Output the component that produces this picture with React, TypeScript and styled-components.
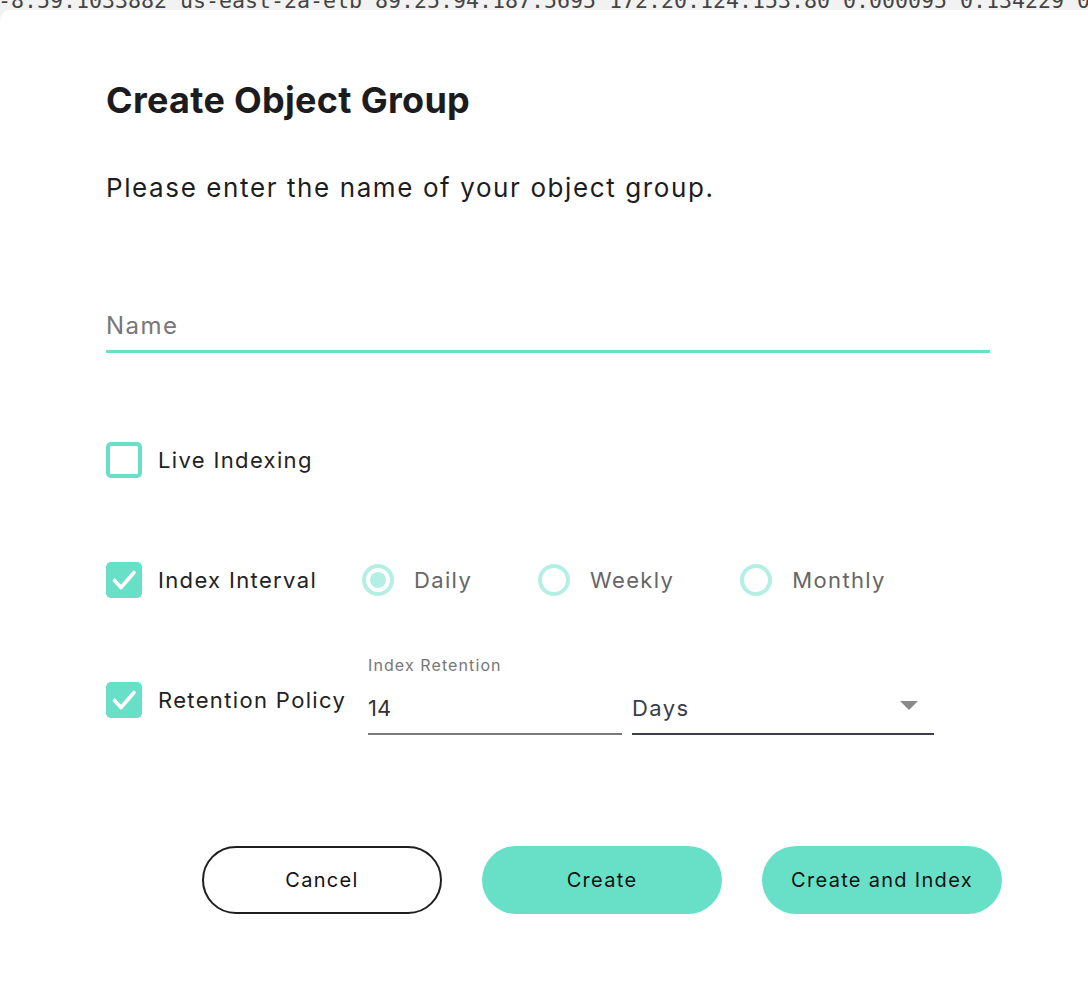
import React from "react";
import styled, { createGlobalStyle } from "styled-components";

const Global = createGlobalStyle`
  html, body { margin: 0; padding: 0; background: #f2f2f2; }
  body { font-family: Inter, "Open Sans", sans-serif; color: #1d1d1f; }
  * { box-sizing: border-box; }
`;

const Page = styled.div`
  width: 1088px;
  height: 988px;
  display: flex;
  flex-direction: column;
  overflow: hidden;
  background: #f2f2f2;
`;

const LogStrip = styled.div`
  height: 10px;
  overflow: hidden;
  flex: none;
`;

const LogLine = styled.div`
  font-family: "DejaVu Sans Mono", "Liberation Mono", monospace;
  font-size: 21.6px;
  line-height: 26px;
  margin-top: -12px;
  margin-left: -2px;
  white-space: nowrap;
  color: #444;
`;

const Dialog = styled.div`
  flex: 1;
  background: #ffffff;
  border-top-left-radius: 10px;
  padding: 70px 0 0 106px;
  display: flex;
  flex-direction: column;
`;

const Title = styled.h1`
  margin: 0;
  font-size: 36px;
  line-height: 40px;
  font-weight: 700;
  letter-spacing: 0.3px;
  color: #1c1c1e;
`;

const Subtitle = styled.p`
  margin: 52px 0 0;
  font-size: 26px;
  line-height: 32px;
  font-weight: 400;
  letter-spacing: 1.6px;
  color: #1d1d1f;
`;

const NameField = styled.div`
  margin-top: 107px;
  width: 884px;
  padding-bottom: 9px;
  border-bottom: 3px solid #68e0c8;
  font-size: 24px;
  line-height: 30px;
  letter-spacing: 1.5px;
  color: #777;
`;

const OptionRow = styled.div<{ $mt: number }>`
  margin-top: ${(p) => p.$mt}px;
  display: flex;
  align-items: center;
`;

const CheckGroup = styled.div<{ $w?: number }>`
  display: flex;
  align-items: center;
  gap: 16px;
  width: ${(p) => (p.$w ? `${p.$w}px` : "auto")};
  flex: none;
`;

const Box = styled.div<{ $checked?: boolean }>`
  width: 36px;
  height: 36px;
  border-radius: 5px;
  flex: none;
  border: ${(p) => (p.$checked ? "none" : "4px solid #68e0c8")};
  background: ${(p) => (p.$checked ? "#68e0c8" : "#fff")};
  display: flex;
  align-items: center;
  justify-content: center;
`;

const OptionText = styled.span`
  font-size: 22px;
  line-height: 30px;
  letter-spacing: 1.35px;
  color: #222;
  white-space: nowrap;
`;

const RadioGroup = styled.div`
  display: flex;
  align-items: center;
  gap: 66px;
`;

const RadioOption = styled.div`
  display: flex;
  align-items: center;
  gap: 20px;
`;

const RadioCircle = styled.div<{ $on?: boolean }>`
  width: 32px;
  height: 32px;
  border-radius: 50%;
  border: 4px solid #b3f0e3;
  display: flex;
  align-items: center;
  justify-content: center;
  &::after {
    content: "";
    width: 16px;
    height: 16px;
    border-radius: 50%;
    background: ${(p) => (p.$on ? "#b3f0e3" : "transparent")};
  }
`;

const RadioText = styled.span`
  font-size: 22px;
  line-height: 30px;
  letter-spacing: 1.35px;
  color: #666;
`;

const RetentionRow = styled.div`
  margin-top: 58px;
  display: flex;
  align-items: flex-start;
`;

const RetentionCheck = styled(CheckGroup)`
  margin-top: 26px;
`;

const Fields = styled.div`
  display: flex;
  align-items: flex-end;
  gap: 10px;
`;

const FieldCol = styled.div`
  display: flex;
  flex-direction: column;
  width: 254px;
`;

const SmallLabel = styled.label`
  font-size: 16px;
  line-height: 18px;
  letter-spacing: 1.1px;
  color: #777;
  margin-bottom: 19px;
`;

const InputValue = styled.div`
  font-size: 22px;
  line-height: 30px;
  color: #333;
  padding-bottom: 10px;
  border-bottom: 2px solid #7a7a7a;
`;

const Select = styled.div`
  width: 302px;
  display: flex;
  align-items: center;
  justify-content: space-between;
  font-size: 22px;
  line-height: 30px;
  letter-spacing: 1.4px;
  color: #3a3d4b;
  padding-bottom: 10px;
  border-bottom: 2px solid #3a3d4b;
`;

const Arrow = styled.span`
  width: 0;
  height: 0;
  border-left: 9px solid transparent;
  border-right: 9px solid transparent;
  border-top: 9px solid #8a8a8a;
  margin-right: 16px;
  margin-top: -6px;
`;

const ButtonRow = styled.div`
  margin-top: 111px;
  margin-left: 96px;
  display: flex;
  gap: 40px;
`;

const Button = styled.button<{ $primary?: boolean }>`
  width: 240px;
  height: 68px;
  border-radius: 34px;
  font-family: inherit;
  font-size: 20px;
  letter-spacing: 1.3px;
  color: #111;
  cursor: pointer;
  border: ${(p) => (p.$primary ? "none" : "2px solid #1f1f1f")};
  background: ${(p) => (p.$primary ? "#68e0c8" : "#fff")};
`;

const Check = () => (
  <svg width="36" height="36" viewBox="0 0 36 36">
    <path d="M8.5 18.5 L15 25.5 L28 10.5" fill="none" stroke="#fff" strokeWidth="3.6" strokeLinecap="round" strokeLinejoin="round" />
  </svg>
);

export default function App() {
  return (
    <Page>
      <Global />
      <LogStrip>
        <LogLine>-8:59.1033882 us-east-2a-elb 89.25.94.187:5695 172.20.124.153:80 0.000095 0.134229 0.000061 200</LogLine>
      </LogStrip>
      <Dialog>
        <Title>Create Object Group</Title>
        <Subtitle>Please enter the name of your object group.</Subtitle>
        <NameField>Name</NameField>
        <OptionRow $mt={89}>
          <CheckGroup>
            <Box />
            <OptionText>Live Indexing</OptionText>
          </CheckGroup>
        </OptionRow>
        <OptionRow $mt={84}>
          <CheckGroup $w={256}>
            <Box $checked>
              <Check />
            </Box>
            <OptionText>Index Interval</OptionText>
          </CheckGroup>
          <RadioGroup>
            <RadioOption>
              <RadioCircle $on />
              <RadioText>Daily</RadioText>
            </RadioOption>
            <RadioOption>
              <RadioCircle />
              <RadioText>Weekly</RadioText>
            </RadioOption>
            <RadioOption>
              <RadioCircle />
              <RadioText>Monthly</RadioText>
            </RadioOption>
          </RadioGroup>
        </OptionRow>
        <RetentionRow>
          <RetentionCheck $w={262}>
            <Box $checked>
              <Check />
            </Box>
            <OptionText>Retention Policy</OptionText>
          </RetentionCheck>
          <Fields>
            <FieldCol>
              <SmallLabel>Index Retention</SmallLabel>
              <InputValue>14</InputValue>
            </FieldCol>
            <Select>
              <span>Days</span>
              <Arrow />
            </Select>
          </Fields>
        </RetentionRow>
        <ButtonRow>
          <Button>Cancel</Button>
          <Button $primary>Create</Button>
          <Button $primary>Create and Index</Button>
        </ButtonRow>
      </Dialog>
    </Page>
  );
}
